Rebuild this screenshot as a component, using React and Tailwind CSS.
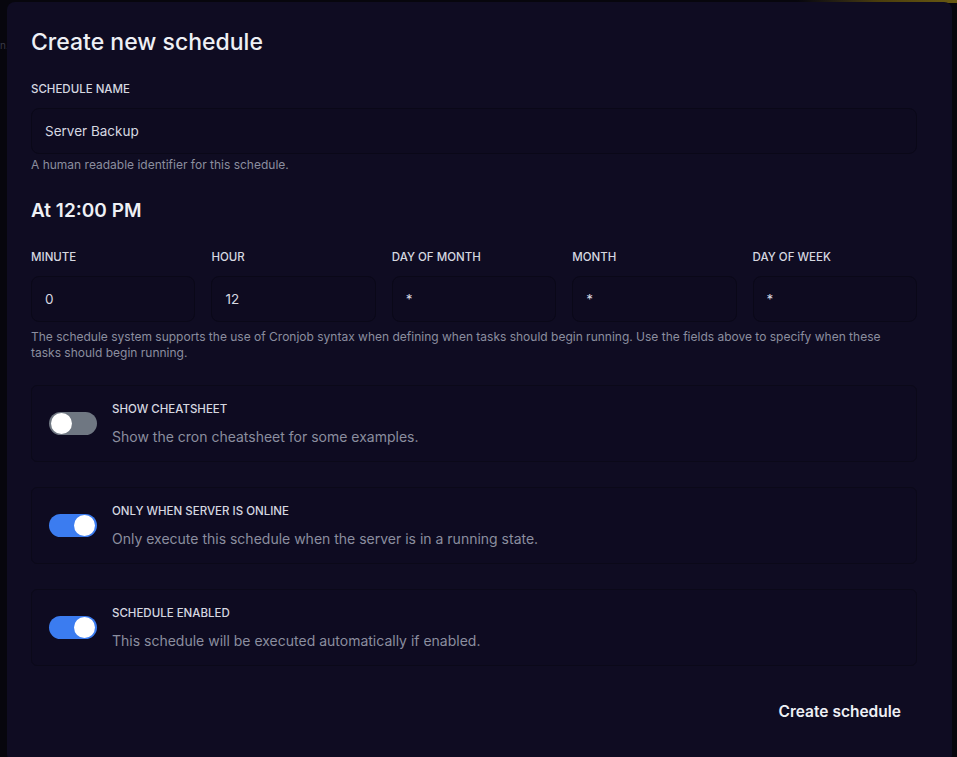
import React from "react";

function Toggle({ on }) {
  return (
    <div
      className={`relative h-[23px] w-[48px] shrink-0 rounded-full ${
        on ? "bg-[#3b7cf0]" : "bg-[#6f7782]"
      }`}
    >
      <div
        className={`absolute top-[1px] h-[21px] w-[21px] rounded-full bg-white ${
          on ? "right-[2px]" : "left-[2px]"
        }`}
      />
    </div>
  );
}

function ToggleCard({ on, title, desc }) {
  return (
    <div className="flex h-[77px] items-center gap-[15px] rounded-md border border-[#0b0919] bg-[#0e0b21] px-[17px]">
      <Toggle on={on} />
      <div className="flex flex-col">
        <div className="text-[11.5px] font-medium uppercase leading-[16px] text-[#d6d8e0]">
          {title}
        </div>
        <div className="mt-[11px] text-[14px] leading-[18px] text-[#8b8e9f]">{desc}</div>
      </div>
    </div>
  );
}

function Field({ label, value }) {
  return (
    <div className="flex flex-col">
      <div className="text-[11.5px] font-medium uppercase leading-[16px] text-[#d6d8e0]">
        {label}
      </div>
      <div className="mt-[11px] flex h-[46px] items-center rounded-lg border border-[#0a0818] bg-[#0e0b20] px-[13px] text-[13.5px] text-[#d6d8e0]">
        {value}
      </div>
    </div>
  );
}

export default function App() {
  return (
    <div
      className="relative h-[757px] w-[957px] overflow-hidden bg-[#07060d] pl-[7px] pr-[5px] pt-[2px]"
      style={{ fontFamily: "Inter, 'Noto Sans', sans-serif" }}
    >
      <div className="absolute right-0 top-0 h-[3px] w-[160px] bg-gradient-to-r from-[#07060d] via-[#4a3d0c] to-[#6a5a12]" />
      <div className="absolute left-0 top-[38px] text-[10px] text-[#3a3a48]">n.</div>
      <div className="relative h-[760px] rounded-lg bg-[#0f0c22] pl-[24px] pr-[35px] pt-[26px]">
        <h2 className="text-[23px] font-medium leading-[28px] text-[#eef0f5]">
          Create new schedule
        </h2>

        <div className="mt-[25px] text-[11.5px] font-medium uppercase leading-[16px] text-[#d6d8e0]">
          Schedule name
        </div>
        <div className="mt-[11px] flex h-[46px] items-center rounded-lg border border-[#0a0818] bg-[#0e0b20] px-[13px] text-[13.5px] text-[#d6d8e0]">
          Server Backup
        </div>
        <div className="mt-[3px] text-[12px] leading-[16px] text-[#8b8e9f]">
          A human readable identifier for this schedule.
        </div>

        <h3 className="mt-[26px] text-[19px] font-semibold leading-[24px] text-[#eef0f5]">
          At 12:00 PM
        </h3>

        <div className="mt-[26px] grid grid-cols-5 gap-[16px]">
          <Field label="Minute" value="0" />
          <Field label="Hour" value="12" />
          <Field label="Day of month" value="*" />
          <Field label="Month" value="*" />
          <Field label="Day of week" value="*" />
        </div>
        <p className="mt-[7px] text-[12px] leading-[16px] text-[#8b8e9f]">
          The schedule system supports the use of Cronjob syntax when defining when tasks should
          begin running. Use the fields above to specify when these
          <br />
          tasks should begin running.
        </p>

        <div className="mt-[24px] flex flex-col gap-[25px]">
          <ToggleCard
            on={false}
            title="Show cheatsheet"
            desc="Show the cron cheatsheet for some examples."
          />
          <ToggleCard
            on
            title="Only when server is online"
            desc="Only execute this schedule when the server is in a running state."
          />
          <ToggleCard
            on
            title="Schedule enabled"
            desc="This schedule will be executed automatically if enabled."
          />
        </div>

        <div className="mt-[26px] flex justify-end">
          <button className="px-[16px] py-[8px] text-[15.5px] font-semibold text-[#eef0f5]">
            Create schedule
          </button>
        </div>
      </div>
    </div>
  );
}
